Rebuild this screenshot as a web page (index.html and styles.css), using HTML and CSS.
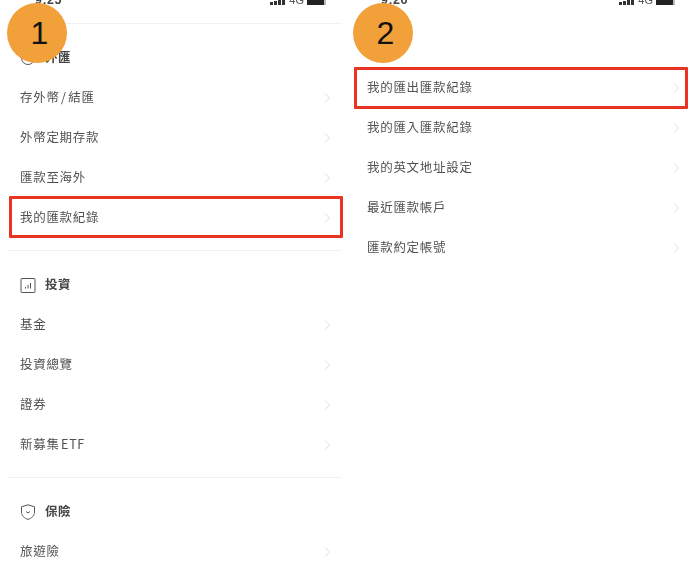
FILE: index.html
```html
<!DOCTYPE html>
<html lang="zh-Hant">
<head>
<meta charset="utf-8">
<title>匯款</title>
<link rel="stylesheet" href="styles.css">
</head>
<body>
<main class="page">
  <section class="panel panel-left">
    <div class="status">
      <span class="time">9:25</span>
      <span class="status-icons">
        <svg class="signal" viewBox="0 0 16 6"><path d="M0 3h3v6H0zM4 2h3v7H4zM8 1h3v8H8zM12 0h3v9h-3z"/></svg>
        <span class="net">4G</span>
        <span class="battery"></span>
      </span>
    </div>
    <h2 class="heading first">
      <svg class="icon" viewBox="0 0 16 16"><circle cx="8" cy="8" r="6.500"/></svg>
      <span>外匯</span>
    </h2>
    <ul class="rows">
      <li class="row"><span class="label">存外幣 / 結匯</span><svg class="chev" viewBox="0 0 8 12"><path d="M2 1.500l4.500 4.500-4.500 4.500"/></svg></li>
      <li class="row"><span class="label">外幣定期存款</span><svg class="chev" viewBox="0 0 8 12"><path d="M2 1.500l4.500 4.500-4.500 4.500"/></svg></li>
      <li class="row"><span class="label">匯款至海外</span><svg class="chev" viewBox="0 0 8 12"><path d="M2 1.500l4.500 4.500-4.500 4.500"/></svg></li>
      <li class="row"><span class="label">我的匯款紀錄</span><svg class="chev" viewBox="0 0 8 12"><path d="M2 1.500l4.500 4.500-4.500 4.500"/></svg></li>
    </ul>
    <hr class="rule">
    <h2 class="heading">
      <svg class="icon" viewBox="0 0 16 16"><rect x="1" y="1.500" width="14" height="14" rx="1"/><path d="M5.500 11.500V10M8 11.500V8M10.500 11.500V6"/></svg>
      <span>投資</span>
    </h2>
    <ul class="rows">
      <li class="row"><span class="label">基金</span><svg class="chev" viewBox="0 0 8 12"><path d="M2 1.500l4.500 4.500-4.500 4.500"/></svg></li>
      <li class="row"><span class="label">投資總覽</span><svg class="chev" viewBox="0 0 8 12"><path d="M2 1.500l4.500 4.500-4.500 4.500"/></svg></li>
      <li class="row"><span class="label">證券</span><svg class="chev" viewBox="0 0 8 12"><path d="M2 1.500l4.500 4.500-4.500 4.500"/></svg></li>
      <li class="row"><span class="label">新募集 ETF</span><svg class="chev" viewBox="0 0 8 12"><path d="M2 1.500l4.500 4.500-4.500 4.500"/></svg></li>
    </ul>
    <hr class="rule">
    <h2 class="heading">
      <svg class="icon" viewBox="0 0 16 16"><path d="M8 .800l6.500 2v5.400c0 3.600-2.800 6-6.500 7.200-3.700-1.200-6.500-3.600-6.500-7.200V2.800z"/><path d="M6 7.500l2 1.500 2-1.500"/></svg>
      <span>保險</span>
    </h2>
    <ul class="rows">
      <li class="row"><span class="label">旅遊險</span><svg class="chev" viewBox="0 0 8 12"><path d="M2 1.500l4.500 4.500-4.500 4.500"/></svg></li>
    </ul>
    <div class="badge badge-left">1</div>
    <div class="mark mark-left"></div>
  </section>
  <section class="panel panel-right">
    <div class="status status-plain">
      <span class="time">9:26</span>
      <span class="status-icons">
        <svg class="signal" viewBox="0 0 16 6"><path d="M0 3h3v6H0zM4 2h3v7H4zM8 1h3v8H8zM12 0h3v9h-3z"/></svg>
        <span class="net">4G</span>
        <span class="battery"></span>
      </span>
    </div>
    <ul class="rows rows-right">
      <li class="row"><span class="label">我的匯出匯款紀錄</span><svg class="chev" viewBox="0 0 8 12"><path d="M2 1.500l4.500 4.500-4.500 4.500"/></svg></li>
      <li class="row"><span class="label">我的匯入匯款紀錄</span><svg class="chev" viewBox="0 0 8 12"><path d="M2 1.500l4.500 4.500-4.500 4.500"/></svg></li>
      <li class="row"><span class="label">我的英文地址設定</span><svg class="chev" viewBox="0 0 8 12"><path d="M2 1.500l4.500 4.500-4.500 4.500"/></svg></li>
      <li class="row"><span class="label">最近匯款帳戶</span><svg class="chev" viewBox="0 0 8 12"><path d="M2 1.500l4.500 4.500-4.500 4.500"/></svg></li>
      <li class="row"><span class="label">匯款約定帳號</span><svg class="chev" viewBox="0 0 8 12"><path d="M2 1.500l4.500 4.500-4.500 4.500"/></svg></li>
    </ul>
    <div class="badge badge-right">2</div>
    <div class="mark mark-right"></div>
  </section>
</main>
</body>
</html>
```
FILE: styles.css
```css
* { box-sizing: border-box; }
html, body {
  margin: 0;
  padding: 0;
  background: #fff;
  overflow: hidden;
}
body {
  width: 698px;
  height: 576px;
  font-family: "Noto Sans CJK TC", "Noto Sans", sans-serif;
  color: #505050;
}
.page {
  display: flex;
  width: 698px;
  height: 576px;
  filter: blur(0.4px);
}
.panel {
  position: relative;
  width: 349px;
  height: 576px;
  overflow: hidden;
}
.panel-left { padding: 0 7px 0 8px; }
.panel-right { padding: 0 7px 0 6px; }
.status {
  display: flex;
  justify-content: space-between;
  align-items: flex-end;
  height: 24px;
  padding: 0 16px 18px 27px;
  border-bottom: 1px solid #f1f1f1;
  line-height: 9px;
}
.status-plain { border-bottom-color: transparent; padding-left: 26px; }
.time {
  font-family: "Liberation Sans", sans-serif;
  font-size: 12.500px;
  font-weight: 700;
  color: #444;
  letter-spacing: 0.500px;
}
.status-icons {
  display: flex;
  align-items: flex-end;
  gap: 3px;
}
.signal {
  width: 16px;
  height: 6px;
  fill: #333;
}
.net {
  font-family: "Liberation Sans", sans-serif;
  font-size: 11px;
  color: #555;
}
.battery {
  display: block;
  width: 19px;
  height: 6px;
  background: #222;
  border-right: 2px solid #bbb;
}
.heading {
  display: flex;
  align-items: center;
  gap: 9px;
  height: 40px;
  margin: 13px 0 0;
  padding-left: 12px;
  font-size: 12.500px;
  font-weight: 700;
  color: #444;
  letter-spacing: 0.600px;
}
.heading span { margin-bottom: 1px; }
.icon {
  width: 16px;
  height: 16px;
  margin-top: 1px;
  fill: none;
  stroke: #555;
  stroke-width: 1;
}
.rows {
  list-style: none;
  margin: 0;
  padding: 0;
}
.rows-right { margin-top: 43px; }
.row {
  display: flex;
  align-items: center;
  justify-content: space-between;
  height: 40px;
  padding: 0 11px 0 12px;
  font-size: 12.500px;
  letter-spacing: 0.700px;
  word-spacing: -2px;
}
.label { margin-bottom: 2px; }
.chev {
  width: 8px;
  height: 12px;
  margin-top: 2px;
  fill: none;
  stroke: #dcdcdc;
  stroke-width: 1;
}
.rule {
  height: 1px;
  margin: 13px 0 0;
  border: 0;
  background: #f1f1f1;
}
.badge {
  position: absolute;
  top: 3px;
  width: 60px;
  height: 60px;
  padding-left: 5px;
  border-radius: 50%;
  background: #f2a13a;
  color: #111;
  font-family: "Liberation Sans", sans-serif;
  font-size: 32px;
  line-height: 60px;
  text-align: center;
}
.badge-left { left: 7px; }
.badge-right { left: 4px; }
.mark {
  position: absolute;
  width: 334px;
  height: 42px;
  border: 3px solid #ea3323;
  border-radius: 1px;
}
.mark-left { left: 9px; top: 196px; }
.mark-right { left: 5px; top: 67px; }
```
